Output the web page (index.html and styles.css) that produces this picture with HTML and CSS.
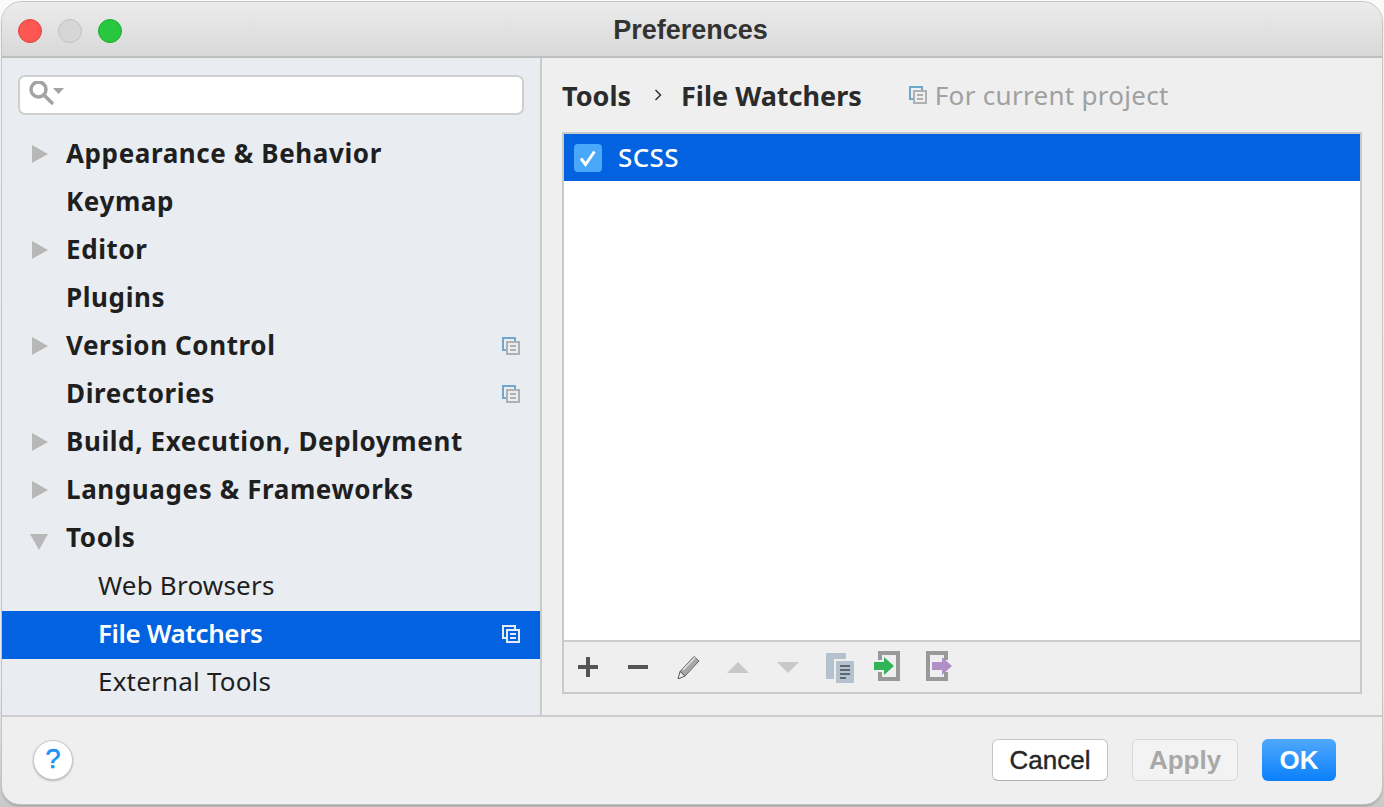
FILE: index.html
```html
<!DOCTYPE html>
<html lang="en">
<head>
    <meta charset="UTF-8">
    <title>Preferences</title>
    <link rel="stylesheet" href="styles.css">
</head>
<body>
    <svg class="defs" width="0" height="0">
        <symbol id="project" viewBox="0 0 18 18">
            <path d="M0 0h14v14H0zM2 2v10h10V2z" fill-rule="evenodd" style="fill: var(--scope-back)"/>
            <path d="M4 4h14v14H4z" style="fill: var(--scope-front)"/>
            <path d="M6 6h10v10H6z" style="fill: var(--scope-bg)"/>
            <path d="M8 8h6v2H8zM8 12h6v2H8z" style="fill: var(--scope-front)"/>
        </symbol>
    </svg>

    <div class="window">
        <header class="titlebar">
            <div class="lights">
                <span class="light red"></span>
                <span class="light grey"></span>
                <span class="light green"></span>
            </div>
            <h1>Preferences</h1>
        </header>

        <div class="main">
            <aside class="sidebar">
                <div class="search">
                    <svg width="36" height="26" viewBox="0 0 36 26">
                        <circle cx="9.500" cy="8.500" r="7.500" fill="none" stroke="#a3a3a3" stroke-width="3.500"/>
                        <path d="M15 14l8 8" stroke="#a3a3a3" stroke-width="3.500" stroke-linecap="round"/>
                        <path d="M24 7h11l-5.500 6z" fill="#a3a3a3"/>
                    </svg>
                </div>
                <ul class="tree">
                    <li class="row top"><span class="arrow right"></span>Appearance &amp; Behavior</li>
                    <li class="row top">Keymap</li>
                    <li class="row top"><span class="arrow right"></span>Editor</li>
                    <li class="row top">Plugins</li>
                    <li class="row top"><span class="arrow right"></span>Version Control<svg class="scope"><use href="#project"/></svg></li>
                    <li class="row top">Directories<svg class="scope"><use href="#project"/></svg></li>
                    <li class="row top"><span class="arrow right"></span>Build, Execution, Deployment</li>
                    <li class="row top"><span class="arrow right"></span>Languages &amp; Frameworks</li>
                    <li class="row top"><span class="arrow down"></span>Tools</li>
                    <li class="row sub">Web Browsers</li>
                    <li class="row sub selected">File Watchers<svg class="scope"><use href="#project"/></svg></li>
                    <li class="row sub">External Tools</li>
                </ul>
            </aside>

            <section class="content">
                <div class="crumbs">
                    <span class="crumb">Tools</span>
                    <svg class="chevron" width="8" height="14" viewBox="0 0 8 14">
                        <path d="M1.500 2l5 5-5 5" fill="none" stroke="#333" stroke-width="1.500"/>
                    </svg>
                    <span class="crumb">File Watchers</span>
                    <svg class="crumb-scope"><use href="#project"/></svg>
                    <span class="current">For current project</span>
                </div>

                <div class="panel">
                    <div class="list">
                        <div class="watcher">
                            <span class="check">
                                <svg width="20" height="20" viewBox="0 0 20 20">
                                    <path d="M3 10.500l4.500 6 9-13" fill="none" stroke="#fff" stroke-width="3"/>
                                </svg>
                            </span>
                            <span class="watcher-name">SCSS</span>
                        </div>
                    </div>
                    <div class="toolbar">
                        <svg class="tool" viewBox="0 0 24 24"><path d="M10 2h4v8h8v4h-8v8h-4v-8H2v-4h8z" fill="#555"/></svg>
                        <svg class="tool" viewBox="0 0 24 24"><path d="M2 10h20v4H2z" fill="#555"/></svg>
                        <svg class="tool" viewBox="0 0 24 24">
                            <path d="M18 1.500l5 4.500-14 15-5-4.500z" fill="#a8a8a8" stroke="#666" stroke-width="1"/>
                            <path d="M4 16.500l5 4.500-7 3z" fill="#eee" stroke="#555" stroke-width="1"/>
                            <path d="M7 15l12-12.500" stroke="#e4e4e4" stroke-width="1.500"/>
                        </svg>
                        <svg class="tool" viewBox="0 0 24 24"><path d="M1 18L12 7l11 11z" fill="#c8c8c8"/></svg>
                        <svg class="tool" viewBox="0 0 24 24"><path d="M1 7h22L12 18z" fill="#c8c8c8"/></svg>
                        <svg class="tool wide" viewBox="0 0 30 32">
                            <path d="M0 2h20v26H0z" fill="#b5c1cc"/>
                            <path d="M9 9h20v24H9z" fill="#b5c1cc" stroke="#efefef" stroke-width="2"/>
                            <path d="M14 14h10v2H14zM14 18h10v2H14zM14 22h10v2H14zM14 26h6v2h-6z" fill="#5d6770"/>
                        </svg>
                        <svg class="tool wide" viewBox="0 0 30 32">
                            <path d="M6 9V2h18v26H6v-7" fill="none" stroke="#999" stroke-width="4"/>
                            <path d="M0 11h10V6l10 9-10 9v-5H0z" fill="#2fb457"/>
                        </svg>
                        <svg class="tool wide" viewBox="0 0 30 32">
                            <path d="M24 9V2H6v26h18v-7" fill="none" stroke="#999" stroke-width="4"/>
                            <path d="M10 11h10V6l10 9-10 9v-5H10z" fill="#b08fc7"/>
                        </svg>
                    </div>
                </div>
            </section>
        </div>

        <footer class="footer">
            <button class="help">?</button>
            <div class="actions">
                <button class="btn">Cancel</button>
                <button class="btn disabled">Apply</button>
                <button class="btn primary">OK</button>
            </div>
        </footer>
    </div>
</body>
</html>
```

FILE: styles.css
```css
* {
    box-sizing: border-box;
}

html, body {
    height: 100%;
}

body {
    margin: 0;
    padding: 2px 2px 3px;
    background: linear-gradient(#fafafa, #f4f4f4 85%, #c9c9c9);
    font-family: "Noto Sans", sans-serif;
    overflow: hidden;
    --scope-back: #6fa8cc;
    --scope-front: #b0b0b0;
    --scope-bg: #e9edf2;
}

.defs {
    position: absolute;
}

.window {
    height: 802px;
    display: flex;
    flex-direction: column;
    background: #efefef;
    border-radius: 20px 20px 18px 18px;
    box-shadow: 0 0 0 1px #c4c4c4, 0 2px 3px rgba(0, 0, 0, 0.25);
    overflow: hidden;
}

.titlebar {
    height: 56px;
    flex: none;
    display: flex;
    align-items: center;
    justify-content: center;
    position: relative;
    padding: 2px 3px 0 0;
    background: linear-gradient(#ececec, #d8d8d8);
    border-bottom: 2px solid #bfbfbf;
}

.titlebar h1 {
    margin: 0;
    font-family: "Liberation Sans", sans-serif;
    font-size: 27px;
    font-weight: bold;
    color: #333;
}

.lights {
    position: absolute;
    left: 16px;
    top: 17px;
    display: flex;
    gap: 16px;
}

.light {
    width: 24px;
    height: 24px;
    border-radius: 50%;
}

.red {
    background: #fc5753;
    border: 1px solid #e0443e;
}

.grey {
    background: #d6d6d6;
    border: 1px solid #c2c2c2;
}

.green {
    background: #27c83f;
    border: 1px solid #1dad2b;
}

.main {
    flex: 1;
    display: flex;
    min-height: 0;
}

.sidebar {
    width: 540px;
    flex: none;
    padding-top: 17px;
    background: #e9edf2;
    border-right: 2px solid #cbcbcb;
}

.search {
    height: 40px;
    margin: 0 16px 15px;
    padding: 4px 9px;
    width: 506px;
    background: #fff;
    border: 2px solid #cfcfcf;
    border-radius: 7px;
}

.tree {
    list-style: none;
    margin: 0;
    padding: 0;
}

.row {
    height: 48px;
    display: flex;
    align-items: center;
    position: relative;
    padding-bottom: 2px;
    font-size: 26px;
    color: #1f1f1f;
}

.top {
    padding-left: 64px;
    font-weight: bold;
    letter-spacing: 0.6px;
}

.sub {
    padding-left: 96px;
    letter-spacing: 0.2px;
}

.selected {
    top: 1px;
    padding-bottom: 4px;
    background: #0262e0;
    color: #fff;
    font-weight: 600;
    letter-spacing: -0.4px;
    --scope-back: #e4ebf5;
    --scope-front: #e4ebf5;
    --scope-bg: #0262e0;
}

.arrow {
    position: absolute;
    left: 30px;
    top: 15px;
    width: 0;
    height: 0;
}

.arrow.right {
    border-left: 16px solid #b8b8b8;
    border-top: 9px solid transparent;
    border-bottom: 9px solid transparent;
}

.arrow.down {
    left: 28px;
    top: 20px;
    border-top: 16px solid #b8b8b8;
    border-left: 9px solid transparent;
    border-right: 9px solid transparent;
}

.scope {
    position: absolute;
    left: 500px;
    top: 15px;
    width: 18px;
    height: 18px;
}

.selected .scope {
    top: 14px;
}

.content {
    flex: 1;
    padding: 0 20px 21px;
    display: flex;
    flex-direction: column;
    min-width: 0;
    --scope-bg: #efefef;
}

.crumbs {
    height: 74px;
    flex: none;
    display: flex;
    align-items: center;
}

.crumb {
    font-size: 27px;
    font-weight: bold;
    color: #2b2b2b;
}

.chevron {
    margin: 0 19px 0 23px;
}

.crumb-scope {
    width: 18px;
    height: 18px;
    margin: 0 8px 0 47px;
}

.current {
    font-size: 26px;
    letter-spacing: 0.3px;
    color: #a0a0a0;
}

.panel {
    flex: 1;
    display: flex;
    flex-direction: column;
    border: 2px solid #c9c9c9;
    min-height: 0;
}

.list {
    flex: 1;
    background: #fff;
}

.watcher {
    height: 47px;
    display: flex;
    align-items: center;
    gap: 16px;
    padding-left: 10px;
    background: #0262e0;
    color: #fff;
    font-size: 26px;
    font-weight: 500;
    letter-spacing: 0.4px;
}

.watcher-name {
    margin-top: -2px;
}

.check {
    width: 28px;
    height: 28px;
    display: flex;
    align-items: center;
    justify-content: center;
    background: #4aa8fb;
    border-radius: 4px;
}

.toolbar {
    height: 52px;
    flex: none;
    display: flex;
    align-items: center;
    gap: 26px;
    padding-left: 12px;
    background: #efefef;
    border-top: 2px solid #cdcdcd;
}

.tool {
    width: 24px;
    height: 24px;
    flex: none;
}

.tool.wide {
    width: 30px;
    height: 32px;
    margin-right: -8px;
}

.footer {
    height: 89px;
    flex: none;
    display: flex;
    align-items: center;
    justify-content: space-between;
    padding: 0 46px 2px 31px;
    border-top: 2px solid #cdcdcd;
}

.help {
    width: 40px;
    height: 40px;
    padding: 0;
    border: 1px solid #c8c8c8;
    border-radius: 50%;
    background: #fff;
    box-shadow: 0 1px 2px rgba(0, 0, 0, 0.25);
    font-family: "Liberation Sans", sans-serif;
    font-size: 27px;
    -webkit-text-stroke: 0.6px;
    color: #1c90f5;
}

.actions {
    display: flex;
    gap: 24px;
}

.btn {
    width: 116px;
    height: 42px;
    padding: 2px 0 0;
    font-family: "Liberation Sans", sans-serif;
    font-size: 26px;
    color: #262626;
    -webkit-text-stroke: 0.4px;
    background: #fff;
    border: 1px solid #c4c4c4;
    border-bottom-color: #b0b0b0;
    border-radius: 6px;
}

.btn.disabled {
    width: 106px;
    background: #f3f3f3;
    color: #a8a8a8;
    border-color: #d8d8d8;
    font-weight: bold;
    -webkit-text-stroke: 0;
}

.btn.primary {
    width: 74px;
    background: linear-gradient(#50a8fc, #0a80fb);
    border: none;
    color: #fff;
    font-weight: bold;
    -webkit-text-stroke: 0;
}
```
